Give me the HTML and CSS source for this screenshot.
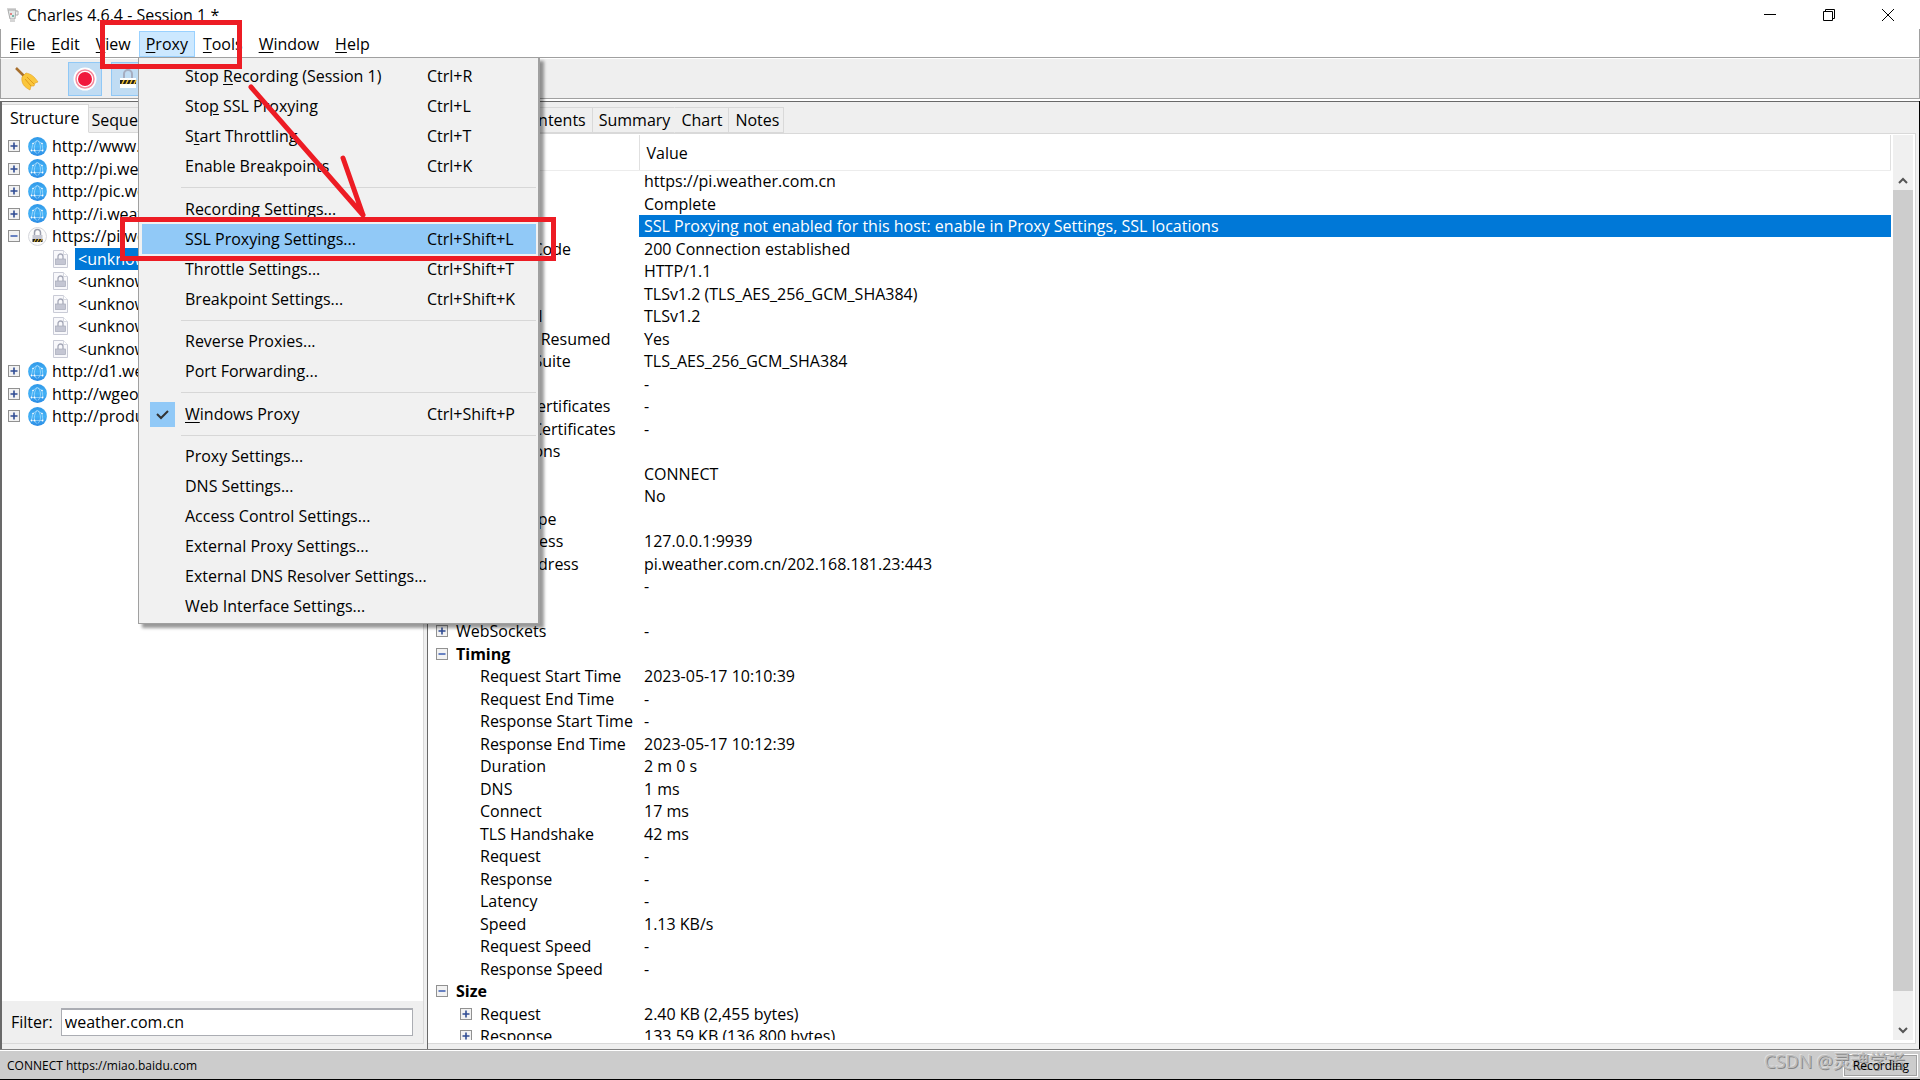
FILE: index.html
```html
<!DOCTYPE html>
<html lang="en"><head><meta charset="utf-8"><title>Charles 4.6.4 - Session 1 *</title>
<link rel="stylesheet" href="styles.css"></head>
<body>
<svg class="defs" aria-hidden="true">
<symbol id="globe" viewBox="0 0 19 19"><defs><linearGradient id="gg" x1="0" y1="0" x2="0" y2="1"><stop offset="0" stop-color="#2f98e8"/><stop offset=".5" stop-color="#45b2f6"/><stop offset="1" stop-color="#2a8be4"/></linearGradient></defs><circle cx="9.5" cy="9.5" r="9.4" fill="url(#gg)"/><g fill="none" stroke="#c9ecff" stroke-width=".7" opacity=".8"><path d="M3 13.500h12M5 6.500l4-3 5 3M5 6.500L3.500 13M14 6.500l1 7M9 3.500C6.500 7 6 10 6.500 13.500l2 3M10 3.500c2.500 3 3 7 2 10l-2 3"/></g><g fill="#fff"><circle cx="3.500" cy="13.500" r=".9"/><circle cx="6.500" cy="13.500" r=".9"/><circle cx="14.500" cy="13.500" r=".9"/><circle cx="5" cy="6.500" r=".8"/><circle cx="14" cy="6.500" r=".8"/></g></symbol>
<symbol id="lock" viewBox="0 0 19 19"><circle cx="9.500" cy="9.500" r="9" fill="#fbfbfb" stroke="#d5d7dc"/><path d="M6.500 8V5.500a3 3 0 0 1 6 0V8" fill="none" stroke="#9b9fae" stroke-width="1.500"/><rect x="4.500" y="8" width="10" height="4" fill="#c6c8d3"/><rect x="4.500" y="12" width="10" height="3" fill="#222"/><path d="M6 15l2-3M9 15l2-3M12 15l2-3" stroke="#f5c02c"/></symbol>
<symbol id="file" viewBox="0 0 15 18"><path d="M.5.5h10l4 4v13H.5z" fill="#f8f8fb" stroke="#c9cbd6"/><path d="M10.500.5v4h4" fill="#fff" stroke="#d6d8e0"/><path d="M5 9V6.500a2.500 2.500 0 0 1 5 0V9" fill="none" stroke="#a6a9b8" stroke-width="1.300"/><rect x="2.500" y="9" width="10" height="5.500" fill="#c4c6d3" stroke="#a6a9b8" stroke-width=".7"/></symbol>
<symbol id="plus" viewBox="0 0 12 12"><rect x=".5" y=".5" width="11" height="11" fill="#f2f2f2" stroke="#919191"/><path d="M2.500 6h7M6 2.500v7" stroke="#2f4b93" stroke-width="1.600"/></symbol>
<symbol id="minus" viewBox="0 0 12 12"><rect x=".5" y=".5" width="11" height="11" fill="#f2f2f2" stroke="#919191"/><path d="M2.500 6h7" stroke="#4465b5" stroke-width="1.600"/></symbol>
</svg>
<div class="window">
<header class="titlebar">
<svg class="app" viewBox="0 0 14 16"><path d="M2 3h8l-1 9H4z" fill="#e4e8e8" stroke="#999" stroke-width=".8"/><path d="M1 2h9M10 4h2v4h-2M4 14h5" stroke="#aaa" fill="none"/><circle cx="5" cy="7" r="1" fill="#d66"/><circle cx="7" cy="9" r="1" fill="#5a9"/></svg>
<span class="title">Charles 4.6.4 - Session 1 *</span>
<div class="winbtns">
<button aria-label="Minimize"><svg viewBox="0 0 14 14"><path d="M1 6.500h12"/></svg></button>
<button aria-label="Restore"><svg viewBox="0 0 14 14"><path d="M1.500 3.500h9v9h-9zM3.500 3V1.500h9v9H11"/></svg></button>
<button aria-label="Close"><svg viewBox="0 0 14 14"><path d="M1 1l12 12M13 1L1 13"/></svg></button>
</div></header>
<nav class="menubar">
<button><u>F</u>ile</button><button><u>E</u>dit</button><button><u>V</u>iew</button><button class="open"><u>P</u>roxy</button><button><u>T</u>ools</button><button><u>W</u>indow</button><button><u>H</u>elp</button>
</nav>
<div class="toolbar">
<button aria-label="Clear"><svg viewBox="0 0 24 24"><path d="M1 1l8 8" stroke="#a86f2c" stroke-width="2.500"/><path d="M7 10l4-4c5 1 8 3 12 9l-3 1-1 3-3 0-1 4C9 20 6 16 7 10z" fill="#fac63b" stroke="#e3a01f" stroke-width=".6"/><path d="M10 12l6 7M12 10l7 7" stroke="#e09a1c" fill="none"/></svg></button>
<button class="on" aria-label="Record"><svg viewBox="0 0 24 24"><circle cx="12" cy="12" r="11.500" fill="#fff"/><circle cx="12" cy="12" r="9" fill="none" stroke="#f58a9d" stroke-width="1.500"/><circle cx="12" cy="12" r="7" fill="#f0193c"/></svg></button>
<button class="on" aria-label="SSL proxying"><svg viewBox="0 0 24 24"><path d="M8 12V7a4 4 0 0 1 8 0v5" fill="none" stroke="#a5adc0" stroke-width="2"/><rect x="4" y="11" width="16" height="10" fill="#fff"/><rect x="4" y="13" width="16" height="4" fill="#222"/><path d="M6 17l2-4M10 17l2-4M14 17l2-4M18 17l2-4" stroke="#f5c02c" stroke-width="1.500"/></svg></button>
</div>
<main class="body">
<section class="left">
<div class="tabs"><button class="tab active">Structure</button><button class="tab">Sequence</button></div>
<ul class="tree" id="tree"></ul>
<div class="filter"><label for="f">Filter:</label><input id="f" value="weather.com.cn"></div>
</section>
<section class="right">
<div class="tabs"><button class="tab">Overview</button><button class="tab">Contents</button><button class="tab">Summary</button><button class="tab">Chart</button><button class="tab">Notes</button></div>
<div class="pane"><div class="tablewrap">
<table><colgroup><col class="namecol"><col></colgroup><thead><tr><th>Name</th><th>Value</th></tr></thead><tbody id="rows"></tbody></table></div>
<div class="scroll"><div class="corner"></div><button aria-label="Scroll up"><svg viewBox="0 0 10 7"><path d="M1 6l4-4 4 4"/></svg></button><div class="track"><div class="thumb"></div></div><button aria-label="Scroll down"><svg viewBox="0 0 10 7"><path d="M1 1l4 4 4-4"/></svg></button></div>
</div></section>
</main>
<footer class="status"><span>CONNECT https://miao.baidu.com</span><span class="rec"><span>Recording</span></span></footer>
</div>
<div class="menu" id="menu" role="menu"></div>
<div class="mark mark-menu"></div><div class="mark mark-item"></div>
<svg class="arrow" viewBox="0 0 130 140"><path d="M8 7l112 128M100 78l20 57" /></svg>
<div class="watermark">CSDN @灵魂学者</div>
<script src="app.js"></script>
</body></html>
```
FILE: styles.css
```css
*{box-sizing:border-box}
body{margin:0;height:100vh;overflow:hidden;background:#fff;color:#000;font:16px/22px "Open Sans","Noto Sans CJK SC",sans-serif}
button,input{font:inherit;color:inherit;border:0;background:none;padding:0;margin:0}
u{text-underline-offset:2px}
.defs{position:absolute;width:0;height:0}
.window{height:100vh;display:flex;flex-direction:column;border-bottom:1px solid #000}
.titlebar{height:29px;flex:none;display:flex;align-items:center}
.app{width:14px;height:16px;margin:0 7px 0 6px}
.title{flex:1}
.winbtns{display:flex;padding-right:3px}
.winbtns button{width:59px;height:29px;display:grid;place-items:center}
.winbtns svg{width:14px;height:14px;fill:none;stroke:#000;stroke-width:1}
.menubar{height:29px;flex:none;display:flex;padding:2px 0 0 1px;border:1px solid #a0a0a0;border-top:0}
.menubar button{padding:0 7px;border:1px solid transparent}
.menubar .open{background:#cce8ff;border-color:#99d1ff;padding:0 6px}
.toolbar{height:41px;flex:none;display:flex;align-items:center;gap:9px;background:#efefef;border:1px solid #a0a0a0;border-top:1px solid #fff;padding-left:9px}
.toolbar button{width:34px;height:34px;display:grid;place-items:center;border:1px solid transparent}
.toolbar button:first-child{margin-right:15px}
.toolbar .on{background:#c0dcf3;border-color:#90c8f6}
.toolbar svg{width:24px;height:24px}
.body{flex:1;min-height:0;display:flex;background:#efefef;border-right:1px solid #000;margin-top:2px}
.left,.right{display:flex;flex-direction:column;min-width:0;border-top:1px solid #696969;border-left:2px solid #696969;padding-bottom:5px}
.left{width:427px;flex:none;padding-right:3px}
.right{flex:1;padding-right:3px;border-left-width:1px}
.tabs{height:31px;flex:none;display:flex;align-items:flex-end}
.tab{height:26px;padding:0 6px;border:1px solid #d9d9d9;border-left:0;white-space:nowrap}
.tab.active{height:29px;padding:0 8px 2px;background:#fff;border-bottom-color:#fff}
.left .tab:not(.active){padding:0 3px}
.right .tab:first-child{padding:0 7px}
.right .tab:nth-child(3){border-right-color:transparent;padding-right:4px}
.right .tab:last-child{padding:0 4px 0 6px}
.tree{list-style:none;margin:0;padding:2px 0 0;flex:1;background:#fff;border-right:1px solid #d9d9d9;overflow:hidden}
.tree li{display:flex;align-items:center;height:22px;padding-left:6px;white-space:nowrap}
.tree li:nth-child(even){height:23px}
.exp{width:12px;height:12px;flex:none}
.globe{width:19px;height:19px;margin:0 5px 0 8px;flex:none}
.tree .leaf{padding-left:51px}
.file{width:15px;height:18px;margin-right:7px;flex:none}
.leaf span{padding:0 3px}
.sel{background:#0078d7;color:#fff}
.filter{height:43px;flex:none;display:flex;align-items:center;gap:8px;padding:0 10px 0 9px;border:1px solid #d9d9d9;border-left:0;border-top:0}
.filter input{flex:1;min-width:0;height:28px;background:#fff;border:1px solid #abadb3;border-top-width:2px;padding:0 3px 2px}
.pane{flex:1;min-height:0;display:flex;background:#fff;border:1px solid #d9d9d9;border-left:0;padding:1px 2px 3px 0}
.tablewrap{flex:1;overflow:hidden;min-width:0;padding-right:2px}
table{width:100%;border-collapse:collapse;table-layout:fixed}
.namecol{width:211px}
th,td{padding:0 0 0 5px;text-align:left;font-weight:400;white-space:nowrap;overflow:hidden}
th{height:35px;border-bottom:1px solid #ececec;border-right:1px solid #e0e0e0;padding:2px 0 0 7px}
tbody tr{height:22px}
tbody tr:nth-child(even){height:23px}
td{line-height:20px}
td .n{display:flex;align-items:center;gap:8px;padding-left:3px}
td .n.nt{padding-left:23px}
td .n.l2{padding-left:27px}
td .n.l2.nt{padding-left:47px}
td b{font-weight:700}
.scroll{width:20px;display:flex;flex-direction:column;background:#f0f0f0}
.corner{height:35px}
.scroll button{height:20px;display:grid;place-items:center}
.scroll svg{width:10px;height:7px;fill:none;stroke:#555;stroke-width:2}
.track{flex:1;display:flex;flex-direction:column;padding-bottom:29px}
.thumb{background:#cdcdcd;flex:1}
.status{height:30px;flex:none;display:flex;align-items:center;justify-content:space-between;background:#ccc;border-top:1px solid #808080;box-shadow:inset 0 1px #fff;font-size:12px;padding:2px 3px 0 7px}
.rec{border:1px solid #a0a0a0;outline:1px solid #fff;line-height:19px;padding:0 7px 0 8px}
.rec span{position:relative;z-index:2}
.menu{position:absolute;left:138px;top:57px;width:402px;background:#f1f1f1;border:1px solid #a0a0a0;border-right-width:2px;padding:3px 2px 2px 3px;box-shadow:4px 4px 3px #0006}
.menu button{display:grid;grid-template-columns:43px 242px 1fr;align-items:center;width:100%;height:30px;text-align:left;white-space:nowrap}
.menu button.hot{background:#91c9f7}
.menu hr{height:13px;margin:0 0 0 39px;border:0;background:linear-gradient(#d7d7d7,#d7d7d7) 0 6px/100% 1px no-repeat}
.menu hr:nth-of-type(even){height:12px}
.check{display:block;width:25px;height:25px;margin-left:8px;background:#91c9f7;stroke:#333;fill:none;stroke-width:2}
.mark{position:absolute;border:5px solid #ed1c24}
.mark-menu{left:100px;top:20px;width:142px;height:49px}
.mark-item{left:120px;top:217px;width:436px;height:44px}
.arrow{position:absolute;left:243px;top:80px;width:130px;height:140px;fill:none;stroke:#ed1c24;stroke-width:5;stroke-linecap:round}
.watermark{position:absolute;z-index:1;right:15px;bottom:8px;font-size:18px;color:#bbb;text-shadow:1px 1px #888,-1px -1px #ddd}
```
FILE: app.js
```js
const svg = (id, cls) => `<svg class="${cls}"><use href="#${id}"/></svg>`;
const site = (t, open) => `<li>${svg(open ? 'minus' : 'plus', 'exp')}${svg(open ? 'lock' : 'globe', 'globe')}<span>${t}</span></li>`;
const leaf = s => `<li class="leaf">${svg('file', 'file')}<span class="${s}">&lt;unknown&gt;</span></li>`;
document.getElementById('tree').innerHTML =
  ['http://www.weather.com.cn', 'http://pi.weather.com.cn', 'http://pic.weather.com.cn', 'http://i.weather.com.cn'].map(t => site(t)).join('') +
  site('https://pi.weather.com.cn', true) + ['sel', '', '', '', ''].map(leaf).join('') +
  ['http://d1.weather.com.cn', 'http://wgeo.weather.com.cn', 'http://product.weather.com.cn'].map(t => site(t)).join('');

// name, value, level, expander
const rows = [
  ['URL', 'https://pi.weather.com.cn', 1], ['Status', 'Complete', 1],
  ['Notes', 'SSL Proxying not enabled for this host: enable in Proxy Settings, SSL locations', 1, '', 'sel'],
  ['Response Code', '200 Connection established', 1], ['Protocol', 'HTTP/1.1', 1],
  ['TLS', 'TLSv1.2 (TLS_AES_256_GCM_SHA384)', 1, 'minus'], ['Protocol', 'TLSv1.2', 2, 'plus'],
  ['Session Resumed', 'Yes', 2, 'plus'], ['Cipher Suite', 'TLS_AES_256_GCM_SHA384', 2, 'plus'],
  ['ALPN', '-', 2, 'plus'], ['Client Certificates', '-', 2, 'plus'], ['Server Certificates', '-', 2, 'plus'],
  ['Extensions', '', 2, 'plus'], ['Method', 'CONNECT', 1], ['Kept Alive', 'No', 1], ['Content-Type', '', 1],
  ['Client Address', '127.0.0.1:9939', 1], ['Remote Address', 'pi.weather.com.cn/202.168.181.23:443', 1],
  ['Tags', '-', 1], ['Stream', '', 1, 'plus'], ['WebSockets', '-', 1, 'plus'], ['<b>Timing</b>', '', 1, 'minus'],
  ['Request Start Time', '2023-05-17 10:10:39', 2], ['Request End Time', '-', 2], ['Response Start Time', '-', 2],
  ['Response End Time', '2023-05-17 10:12:39', 2], ['Duration', '2 m 0 s', 2], ['DNS', '1 ms', 2], ['Connect', '17 ms', 2],
  ['TLS Handshake', '42 ms', 2], ['Request', '-', 2], ['Response', '-', 2], ['Latency', '-', 2], ['Speed', '1.13 KB/s', 2],
  ['Request Speed', '-', 2], ['Response Speed', '-', 2], ['<b>Size</b>', '', 1, 'minus'],
  ['Request', '2.40 KB (2,455 bytes)', 2, 'plus'], ['Response', '133.59 KB (136,800 bytes)', 2, 'plus']];
document.getElementById('rows').innerHTML = rows.map(([n, v, l, x, s]) =>
  `<tr><td><div class="n l${l} ${x ? '' : 'nt'}">${x ? svg(x, 'exp') : ''}${n}</div></td><td class="${s || ''}">${v}</td></tr>`).join('');

const items = [['Stop <u>R</u>ecording (Session 1)', 'Ctrl+R'], ['Sto<u>p</u> SSL Proxying', 'Ctrl+L'], ['S<u>t</u>art Throttling', 'Ctrl+T'],
  ['Enable Breakpoints', 'Ctrl+K'], 0, ['Recording Settings...', ''], ['SSL Proxying Settings...', 'Ctrl+Shift+L', 'hot'],
  ['Throttle Settings...', 'Ctrl+Shift+T'], ['Breakpoint Settings...', 'Ctrl+Shift+K'], 0, ['Reverse Proxies...', ''],
  ['Port Forwarding...', ''], 0, ['<u>W</u>indows Proxy', 'Ctrl+Shift+P', 'checked'], 0, ['Proxy Settings...', ''], ['DNS Settings...', ''],
  ['Access Control Settings...', ''], ['External Proxy Settings...', ''], ['External DNS Resolver Settings...', ''], ['Web Interface Settings...', '']];
document.getElementById('menu').innerHTML = items.map(i => i ?
  `<button role="menuitem" class="${i[2] || ''}"><span>${i[2] === 'checked' ? '<svg class="check" viewBox="0 0 25 25"><path d="M7 12l4 4 7-7"/></svg>' : ''}</span><span>${i[0]}</span><span>${i[1]}</span></button>` : '<hr>').join('');
```
